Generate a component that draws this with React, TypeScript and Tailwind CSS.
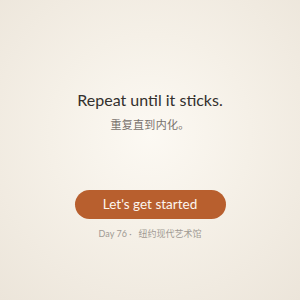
export default function App() {
  return (
    <div
      className="w-[300px] h-[300px] flex flex-col items-center bg-[radial-gradient(circle_at_50%_45%,#fcf9f3_0%,#f5f0e7_45%,#ece5da_100%)]"
      style={{ fontFamily: 'Lato, "Noto Sans CJK SC", sans-serif' }}
    >
      <h1 className="mt-[89px] text-[16px] leading-[22px] text-[#33302d]">
        Repeat until it sticks.
      </h1>
      <p className="mt-[6px] text-[11px] leading-[16px] text-[#77706a] tracking-[0.3px]">
        重复直到内化。
      </p>
      <button className="mt-[57px] w-[151px] h-[29px] rounded-full bg-[#b85f2e] text-[#fdf6ef] text-[13.5px] leading-none">
        Let's get started
      </button>
      <p className="mt-[9px] text-[9px] leading-[12px] text-[#a09a93]">
        Day 76 ·&nbsp;&nbsp;&nbsp;纽约现代艺术馆
      </p>
    </div>
  );
}
